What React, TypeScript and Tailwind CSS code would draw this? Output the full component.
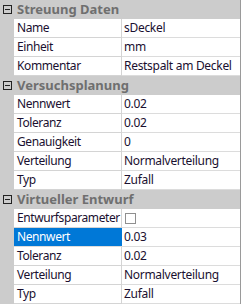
import React from 'react';

type Row = { name: string; value?: string; check?: boolean; selected?: boolean };
type Section = { title: string; rows: Row[] };

const sections: Section[] = [
  {
    title: 'Streuung Daten',
    rows: [
      { name: 'Name', value: 'sDeckel' },
      { name: 'Einheit', value: 'mm' },
      { name: 'Kommentar', value: 'Restspalt am Deckel' },
    ],
  },
  {
    title: 'Versuchsplanung',
    rows: [
      { name: 'Nennwert', value: '0.02' },
      { name: 'Toleranz', value: '0.02' },
      { name: 'Genauigkeit', value: '0' },
      { name: 'Verteilung', value: 'Normalverteilung' },
      { name: 'Typ', value: 'Zufall' },
    ],
  },
  {
    title: 'Virtueller Entwurf',
    rows: [
      { name: 'Entwurfsparameter', check: true },
      { name: 'Nennwert', value: '0.03', selected: true },
      { name: 'Toleranz', value: '0.02' },
      { name: 'Verteilung', value: 'Normalverteilung' },
      { name: 'Typ', value: 'Zufall' },
    ],
  },
];

function MinusBox() {
  return (
    <span className="w-[9px] h-[9px] border border-[#222] flex items-center justify-center bg-[#cccccc]">
      <span className="w-[5px] h-px bg-[#222]" />
    </span>
  );
}

export default function App() {
  return (
    <div
      className="w-[241px] h-[304px] overflow-hidden bg-[#cccccc] border-r border-[#9a9a9a] text-[12px] leading-none"
      style={{ fontFamily: '"Noto Sans", "Open Sans", sans-serif' }}
    >
      {sections.map((s) => (
        <div key={s.title}>
          {/* category header */}
          <div className="h-[19px] flex items-center">
            <div className="w-[14px] flex justify-center pl-[1px]">
              <MinusBox />
            </div>
            <span className="pl-[3px] text-[13px] font-bold text-[#6f6f6f]">{s.title}</span>
          </div>
          {s.rows.map((r) => (
            <div key={s.title + r.name} className="h-[19px] flex">
              <div className="w-[14px] shrink-0" />
              <div
                className={
                  r.selected
                    ? 'w-[108px] shrink-0 flex items-center pl-[3px] bg-[#0078d7] text-white border-b border-[#dcdcdc]'
                    : 'w-[108px] shrink-0 flex items-center pl-[3px] bg-white text-[#1a1030] border-b border-r border-[#d4d4d4]'
                }
              >
                <span className="tracking-[-0.4px]">{r.name}</span>
              </div>
              <div className="flex-1 flex items-center pl-[2px] bg-white text-[#1a1030] border-b border-[#dcdcdc]">
                {r.check ? (
                  <span className="ml-[1px] w-[11px] h-[11px] border border-[#8f8f8f] bg-white" />
                ) : (
                  <span className="tracking-[-0.3px]">{r.value}</span>
                )}
              </div>
            </div>
          ))}
        </div>
      ))}
    </div>
  );
}
